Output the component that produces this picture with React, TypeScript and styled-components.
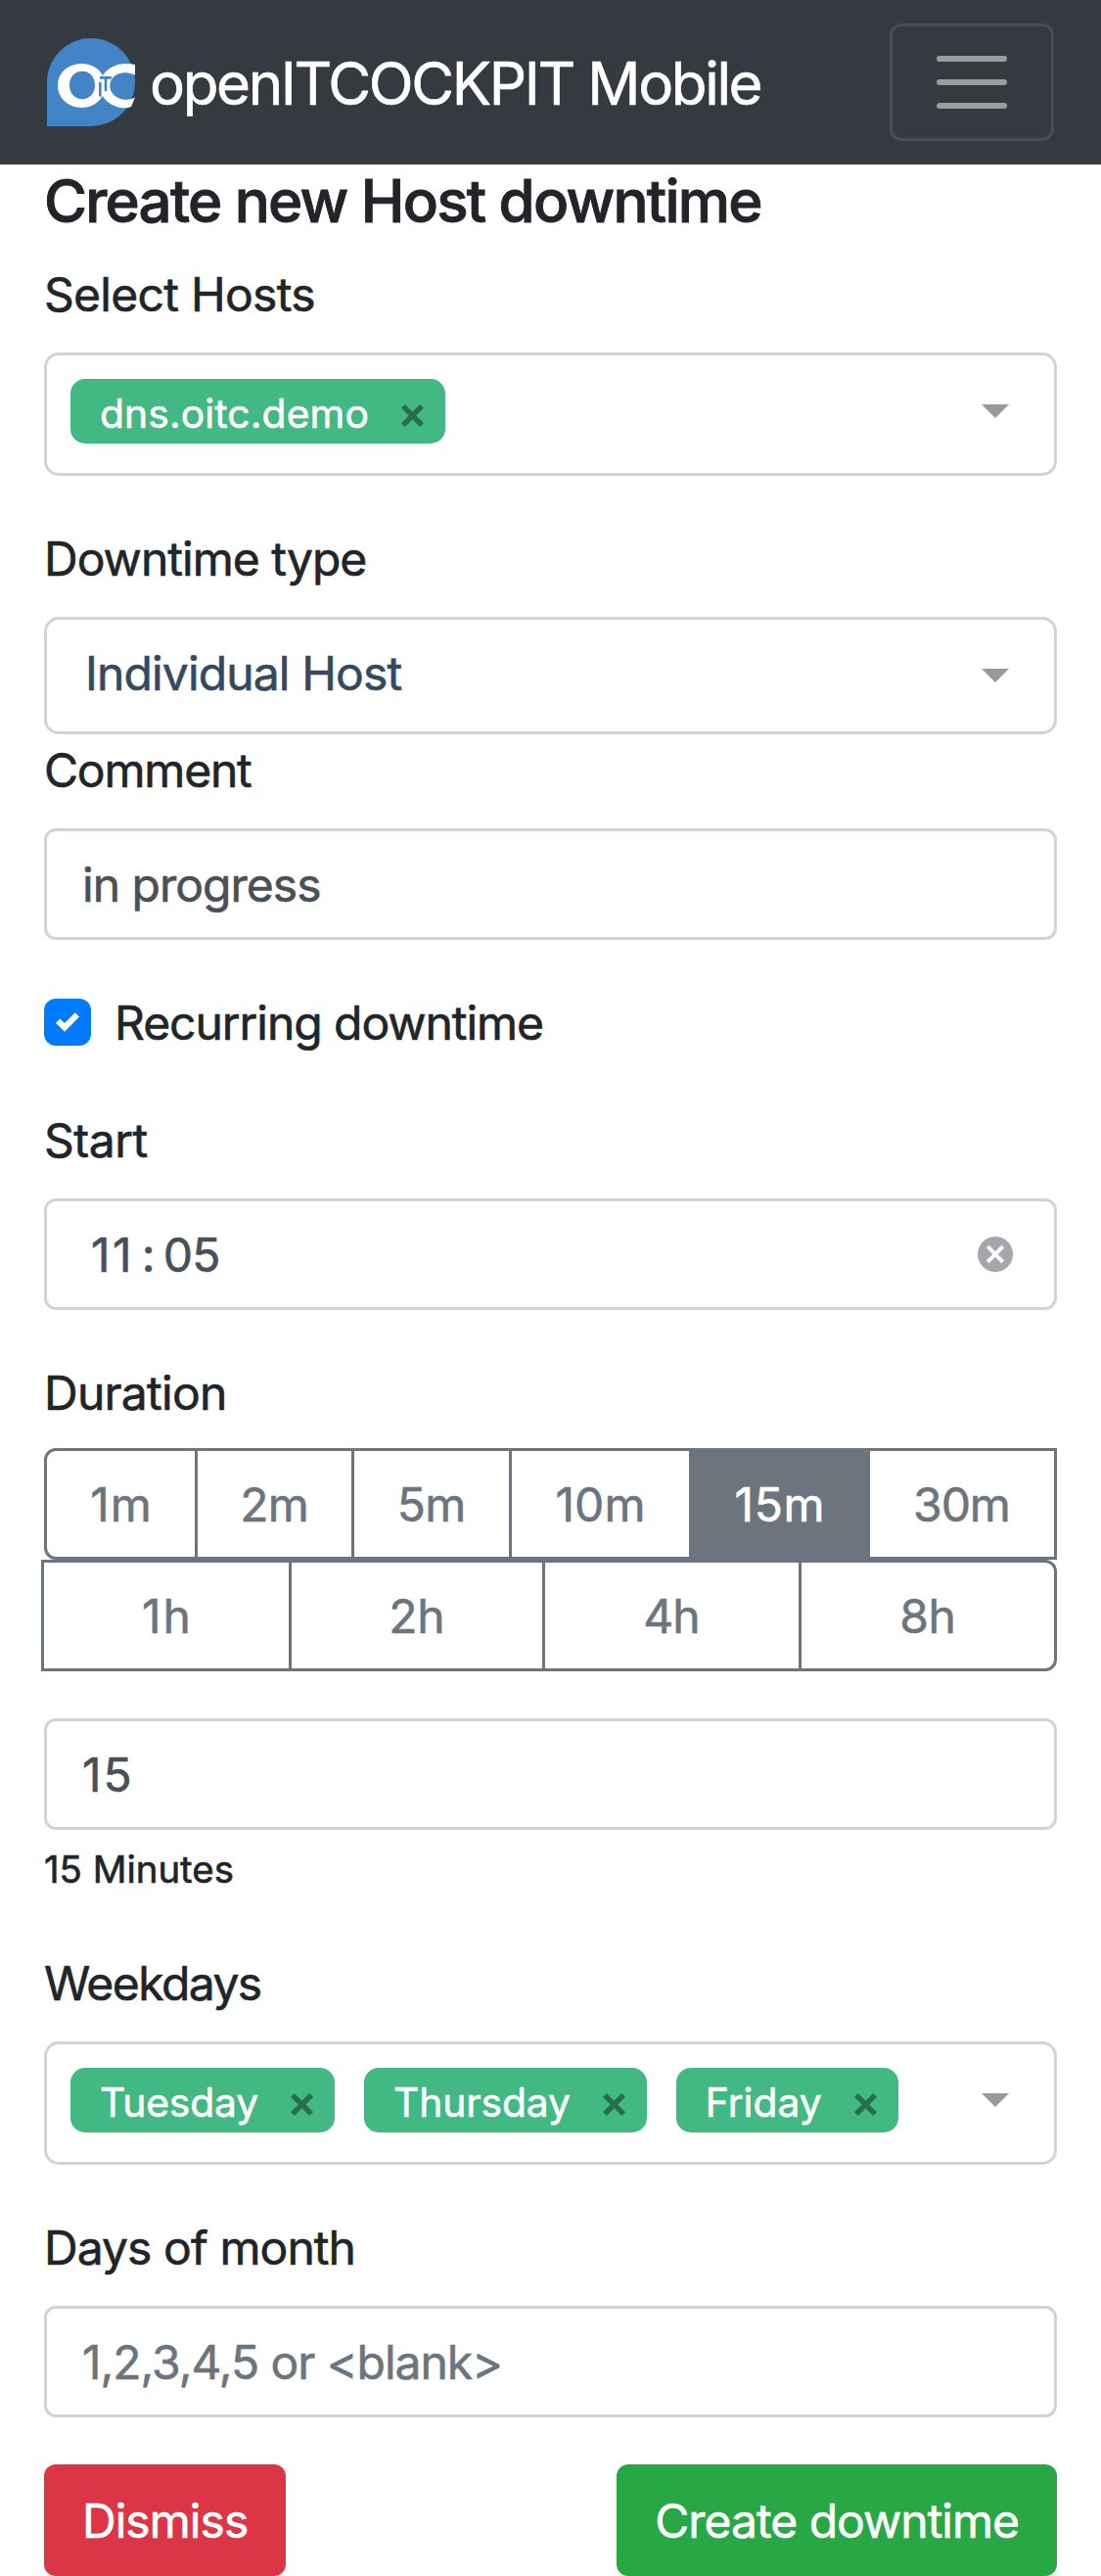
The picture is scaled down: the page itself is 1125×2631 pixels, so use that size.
import React from "react";
import styled, { createGlobalStyle, css } from "styled-components";

const GlobalStyle = createGlobalStyle`
  *, *::before, *::after { box-sizing: border-box; }
  body {
    margin: 0;
    background: #fff;
    color: #212529;
    font-family: Inter, "Noto Sans", sans-serif;
    font-size: 48px;
    line-height: 73px;
    -webkit-text-stroke: 0.6px currentColor;
  }
  button, input { font: inherit; margin: 0; }
`;

const Page = styled.div`
  width: 1125px;
  height: 2631px;
  overflow: hidden;
`;

const Navbar = styled.nav`
  display: flex;
  align-items: center;
  justify-content: space-between;
  height: 168px;
  padding: 24px 48px;
  background: #343a40;
`;

const Brand = styled.div`
  display: flex;
  align-items: center;
  gap: 15px;
`;

const BrandName = styled.span`
  padding-top: 2px;
  color: #fff;
  font-size: 60px;
  line-height: 74px;
  letter-spacing: -2.34px;
  white-space: nowrap;
`;

const Logo = styled.svg`
  width: 90px;
  height: 90px;
`;

const Toggler = styled.button`
  display: flex;
  align-items: center;
  justify-content: center;
  width: 168px;
  height: 120px;
  padding: 0;
  border: 3px solid rgba(255, 255, 255, 0.1);
  border-radius: 12px;
  background: transparent;
`;

const Form = styled.main`
  padding: 0 45px;
`;

const Title = styled.h1`
  height: 72px;
  margin: 0 0 24px;
  font-size: 60px;
  font-weight: 500;
  line-height: 74px;
  letter-spacing: -1.76px;
  white-space: nowrap;
  -webkit-text-stroke-width: 0.9px;
`;

const Group = styled.section<{ $flush?: boolean }>`
  margin-bottom: ${(p) => (p.$flush ? 0 : 48)}px;
`;

const Label = styled.label<{ $tracking: number; $tight?: boolean }>`
  display: block;
  height: 72px;
  margin-bottom: ${(p) => (p.$tight ? 21 : 24)}px;
  letter-spacing: ${(p) => p.$tracking}px;
  white-space: nowrap;
`;

const frame = css`
  width: 100%;
  border: 3px solid #ced4da;
  background: #fff;
`;

const Input = styled.input<{ $tracking: number }>`
  ${frame}
  display: block;
  height: 114px;
  padding: 18px 36px 17px;
  border-radius: 12px;
  outline: none;
  color: #495057;
  letter-spacing: ${(p) => p.$tracking}px;

  &::placeholder {
    color: #6c757d;
    opacity: 1;
  }
`;

const Select = styled.div<{ $multiple?: boolean }>`
  ${frame}
  display: flex;
  align-items: flex-start;
  justify-content: space-between;
  height: ${(p) => (p.$multiple ? 126 : 120)}px;
  padding-right: 46px;
  border-radius: 15px;
`;

const Selected = styled.span`
  padding: 18px 0 0 39px;
  color: #35495e;
  letter-spacing: -0.86px;
  white-space: nowrap;
`;

const Tags = styled.div`
  display: flex;
  gap: 30px;
  padding: 24px 0 0 24px;
`;

const Tag = styled.span<{ $tracking: number }>`
  display: flex;
  gap: 33px;
  height: 66px;
  padding: 0 22px 0 30px;
  border-radius: 15px;
  background: #42b883;
  color: #fff;
  font-size: 40.8px;
  line-height: 70px;
  letter-spacing: ${(p) => p.$tracking}px;
  white-space: nowrap;
`;

const RemoveIcon = styled.svg`
  width: 23px;
  height: 23px;
  margin-top: 26px;
`;

const Caret = styled.i`
  margin-top: 50px;
  border: 14px solid transparent;
  border-top-color: #999;
  border-bottom: 0;
`;

const CheckRow = styled.label`
  display: flex;
  align-items: flex-start;
  gap: 24px;
  height: 72px;
  letter-spacing: -1.05px;
  white-space: nowrap;
`;

const CheckBox = styled.span`
  display: grid;
  place-items: center;
  width: 48px;
  height: 48px;
  margin-top: 12px;
  border-radius: 12px;
  background: #007bff;
`;

const TimeField = styled.div`
  ${frame}
  display: flex;
  justify-content: space-between;
  height: 114px;
  padding: 18px 42px 17px 45px;
  border-radius: 12px;
  color: #495057;
`;

const Time = styled.div`
  display: flex;
  gap: 8px;
`;

const TimePart = styled.span<{ $tracking?: number }>`
  letter-spacing: ${(p) => p.$tracking ?? 0}px;
`;

const ClearIcon = styled.svg`
  width: 36px;
  height: 36px;
  margin-top: 18px;
`;

const ButtonRow = styled.div<{ $lower?: boolean }>`
  display: flex;
  margin-left: ${(p) => (p.$lower ? -3 : 0)}px;
`;

const DurationButton = styled.button<{
  $width: number;
  $tracking: number;
  $active?: boolean;
  $radius?: string;
}>`
  flex: 0 0 ${(p) => p.$width}px;
  height: 114px;
  padding: 18px 0 17px;
  border: 3px solid #6c757d;
  border-radius: ${(p) => p.$radius ?? "0"};
  background: ${(p) => (p.$active ? "#6c757d" : "#fff")};
  color: ${(p) => (p.$active ? "#fff" : "#6c757d")};
  letter-spacing: ${(p) => p.$tracking}px;
  text-indent: ${(p) => p.$tracking}px;
  text-align: center;
  white-space: nowrap;

  & + & {
    margin-left: -3px;
  }
`;

const Hint = styled.div`
  height: 72px;
  font-size: 38.4px;
  line-height: 80px;
  letter-spacing: 0;
`;

const Actions = styled.div`
  display: flex;
  justify-content: space-between;
`;

const ActionButton = styled.button<{ $color: string; $tracking: number }>`
  height: 114px;
  padding: 21px 39px 20px;
  border: 0;
  border-radius: 12px;
  background: ${(p) => p.$color};
  color: #fff;
  letter-spacing: ${(p) => p.$tracking}px;
  white-space: nowrap;
`;

const minuteOptions = [
  { text: "1m", width: 157, tracking: 0.88, radius: "12px 0 0 12px" },
  { text: "2m", width: 163, tracking: -0.77 },
  { text: "5m", width: 164, tracking: -0.58 },
  { text: "10m", width: 187, tracking: 0.1 },
  { text: "15m", width: 185, tracking: 0.65, active: true },
  { text: "30m", width: 194, tracking: -1.11 },
];

const hourOptions = [
  { text: "1h", width: 256, tracking: 1.98 },
  { text: "2h", width: 262, tracking: -0.27 },
  { text: "4h", width: 265, tracking: -1.01 },
  { text: "8h", width: 264, tracking: -0.5, radius: "0 12px 12px 0" },
];

type Option = {
  text: string;
  width: number;
  tracking: number;
  radius?: string;
  active?: boolean;
};

function Durations({ options, lower }: { options: Option[]; lower?: boolean }) {
  return (
    <ButtonRow $lower={lower}>
      {options.map((o) => (
        <DurationButton
          key={o.text}
          type="button"
          $width={o.width}
          $tracking={o.tracking}
          $active={o.active}
          $radius={o.radius}
        >
          {o.text}
        </DurationButton>
      ))}
    </ButtonRow>
  );
}

function Chip({ text, tracking }: { text: string; tracking: number }) {
  return (
    <Tag $tracking={tracking}>
      {text}
      <RemoveIcon viewBox="0 0 23 23">
        <path d="M1.9 1.9 21.1 21.1M21.1 1.9 1.9 21.1" stroke="#266e4e" strokeWidth="5.4" />
      </RemoveIcon>
    </Tag>
  );
}

function BrandLogo() {
  return (
    <Logo viewBox="0 0 90 90">
      <path d="M0 90V45A45 45 0 1 1 45 90Z" fill="#4284c6" />
      <path
        fill="#fff"
        fillRule="evenodd"
        d="M35.5 26C49 26 59.5 35.5 59.5 48.3S49 71 35.5 71 11 61.3 11 48.3 22 26 35.5 26ZM36 33.8C28 33.8 23 40 23 48S28 62.2 36 62.2 49 56 49 48 44 33.8 36 33.8Z"
      />
      <path
        fill="#fff"
        d="M90 27C86 26 81.5 25.8 77.5 26.2C64 27.5 54 37 54 48.5S64 70.2 78 71.2C81 71.4 84 70.9 86 70L90 60.5C86 62.7 81.5 63.2 77.5 62.4C69.500 61 64.300 55.500 64.300 48.500S69.500 36.500 77 35.400C82 34.700 86 35.400 90 37.700Z"
      />
      <path d="M54 40.400h12M60 41v13M54.300 45v14.500" stroke="#4284c6" strokeWidth="2.600" />
    </Logo>
  );
}

export default function App() {
  return (
    <Page>
      <GlobalStyle />
      <Navbar>
        <Brand>
          <BrandLogo />
          <BrandName>openITCOCKPIT Mobile</BrandName>
        </Brand>
        <Toggler type="button" aria-label="Menu">
          <svg width="72" height="54" viewBox="0 0 72 54">
            <path
              d="M3 3h66M3 27h66M3 51h66"
              stroke="#fff"
              strokeOpacity="0.5"
              strokeWidth="6"
              strokeLinecap="round"
            />
          </svg>
        </Toggler>
      </Navbar>
      <Form>
        <Title>Create new Host downtime</Title>
        <Group>
          <Label $tracking={-0.71}>Select Hosts</Label>
          <Select $multiple>
            <Tags>
              <Chip text="dns.oitc.demo" tracking={0.1} />
            </Tags>
            <Caret />
          </Select>
        </Group>
        <Group $flush>
          <Label $tracking={-0.98}>Downtime type</Label>
          <Select>
            <Selected>Individual Host</Selected>
            <Caret />
          </Select>
        </Group>
        <Group>
          <Label $tracking={-1.2}>Comment</Label>
          <Input $tracking={-0.98} defaultValue="in progress" />
        </Group>
        <Group>
          <CheckRow>
            <CheckBox>
              <svg width="24" height="24" viewBox="0 0 8 8">
                <path
                  fill="#fff"
                  d="M6.564.75l-3.59 3.612-1.538-1.55L0 4.26 2.974 7.25 8 2.193z"
                />
              </svg>
            </CheckBox>
            Recurring downtime
          </CheckRow>
        </Group>
        <Group>
          <Label $tracking={-0.5}>Start</Label>
          <TimeField>
            <Time>
              <TimePart $tracking={2.38}>11</TimePart>
              <TimePart>:</TimePart>
              <TimePart $tracking={-0.78}>05</TimePart>
            </Time>
            <ClearIcon viewBox="0 0 36 36">
              <circle cx="18" cy="18" r="18" fill="#a4a7ab" />
              <path
                d="M10.200 10.200 25.800 25.800M25.800 10.200 10.200 25.800"
                stroke="#fff"
                strokeWidth="4"
              />
            </ClearIcon>
          </TimeField>
        </Group>
        <Group>
          <Label $tracking={-0.75} $tight>
            Duration
          </Label>
          <Durations options={minuteOptions} />
          <Durations options={hourOptions} lower />
        </Group>
        <Group>
          <Input $tracking={1.88} defaultValue="15" />
          <Hint>15 Minutes</Hint>
        </Group>
        <Group>
          <Label $tracking={-1.55}>Weekdays</Label>
          <Select $multiple>
            <Tags>
              <Chip text="Tuesday" tracking={-0.14} />
              <Chip text="Thursday" tracking={-0.12} />
              <Chip text="Friday" tracking={-0.01} />
            </Tags>
            <Caret />
          </Select>
        </Group>
        <Group>
          <Label $tracking={-0.92}>Days of month</Label>
          <Input $tracking={-1.02} placeholder="1,2,3,4,5 or &lt;blank&gt;" />
        </Group>
        <Actions>
          <ActionButton type="button" $color="#dc3545" $tracking={-0.95}>
            Dismiss
          </ActionButton>
          <ActionButton type="button" $color="#28a745" $tracking={-1}>
            Create downtime
          </ActionButton>
        </Actions>
      </Form>
    </Page>
  );
}
